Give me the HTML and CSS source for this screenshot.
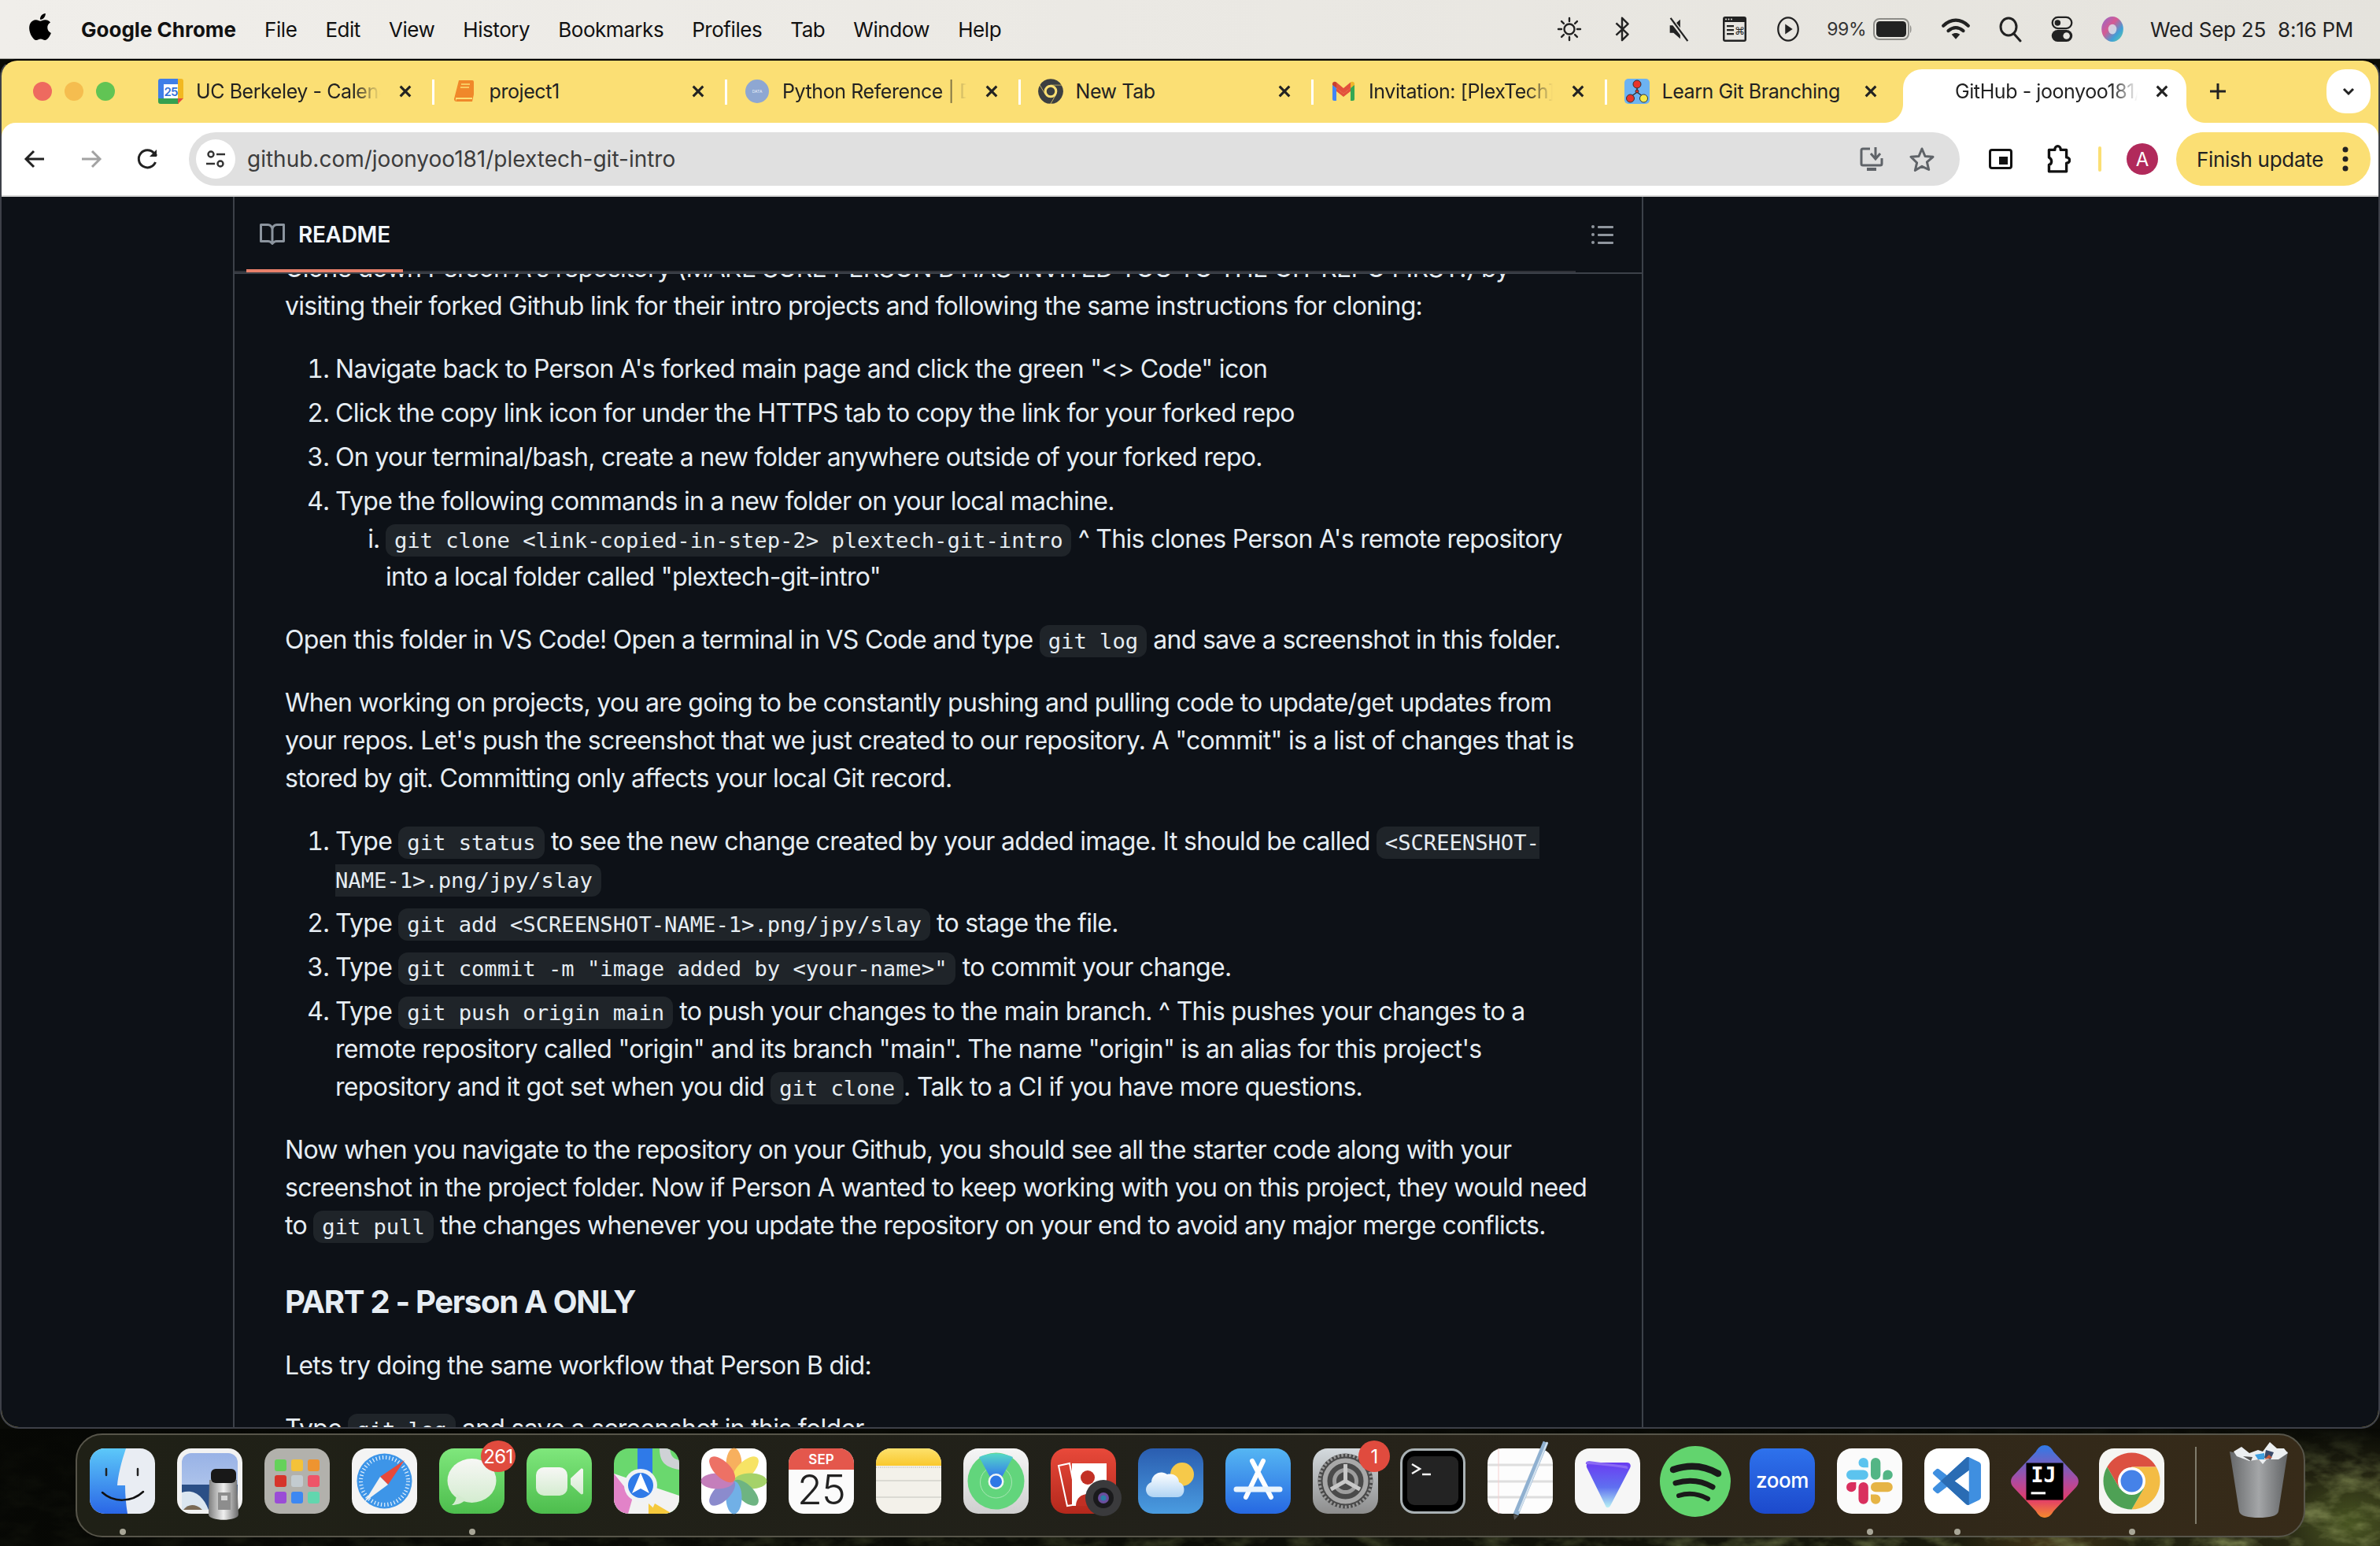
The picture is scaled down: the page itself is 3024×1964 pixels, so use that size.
FILE: index.html
```html
<!DOCTYPE html>
<html lang="en">
<head>
<meta charset="utf-8">
<title>GitHub - joonyoo181/plextech-git-intro</title>
<link rel="stylesheet" href="styles.css">
</head>
<body>
<div class="screen">
  <header class="menubar">
    <svg class="apple" viewBox="0 0 24 24"><path d="M12.152 6.896c-.948 0-2.415-1.078-3.96-1.04-2.04.027-3.91 1.183-4.961 3.014-2.117 3.675-.546 9.103 1.519 12.09 1.013 1.454 2.208 3.09 3.792 3.039 1.52-.065 2.09-.987 3.935-.987 1.831 0 2.35.987 3.96.948 1.637-.026 2.676-1.48 3.676-2.948 1.156-1.688 1.636-3.325 1.662-3.415-.039-.013-3.182-1.221-3.22-4.857-.026-3.04 2.48-4.494 2.597-4.559-1.429-2.09-3.623-2.324-4.39-2.376-2-.156-3.675 1.09-4.61 1.09zM15.53 3.83c.843-1.012 1.4-2.427 1.245-3.83-1.207.052-2.662.805-3.532 1.818-.78.896-1.454 2.338-1.273 3.714 1.338.104 2.715-.688 3.559-1.701"/></svg>
    <nav class="menus">
      <span class="menu-app">Google Chrome</span>
      <span>File</span><span>Edit</span><span>View</span><span>History</span><span>Bookmarks</span><span>Profiles</span><span>Tab</span><span>Window</span><span>Help</span>
    </nav>
    <div class="status">
      <span class="st"><svg viewBox="0 0 32 32" class="st-ic" fill="none" stroke="#222" stroke-width="2.4" stroke-linecap="round"><circle cx="16" cy="16" r="6.5"/><path d="M16 2v4M16 26v4M2 16h4M26 16h4M6.1 6.1l2.8 2.8M23.1 23.1l2.8 2.8M6.1 25.9l2.8-2.8M23.1 8.9l2.8-2.8"/></svg></span>
      <span class="st st-bt"><svg viewBox="0 0 32 36" class="st-ic" fill="none" stroke="#222" stroke-width="2.6" stroke-linejoin="round"><path d="M8 10l16 15-8 8V3l8 8L8 26"/></svg></span>
      <span class="st st-mute"><svg viewBox="0 0 32 36" class="st-ic"><path d="M4 13h5l9-8v26l-9-8H4z" fill="#222"/><path d="M4 3l24 31" stroke="#e8e6e1" stroke-width="6"/><path d="M5 3l23 31" stroke="#222" stroke-width="2.4"/></svg></span>
      <span class="st st-cmdwin"><svg viewBox="0 0 32 34" class="st-ic"><rect x="1" y="1" width="30" height="32" rx="3" fill="#222"/><rect x="3.5" y="8" width="25" height="22.5" fill="#e8e6e1"/><path d="M6 12h9v2.2H6zM6 17h9v2.2H6zM6 22h9v2.2H6z" fill="#222"/><text x="22" y="24" class="st-cmd">⌘</text><circle cx="5" cy="4.5" r="1" fill="#e8e6e1"/><circle cx="8.5" cy="4.5" r="1" fill="#e8e6e1"/><circle cx="12" cy="4.5" r="1" fill="#e8e6e1"/></svg></span>
      <span class="st"><svg viewBox="0 0 32 36" class="st-ic"><ellipse cx="16" cy="18" rx="13.5" ry="15.5" fill="none" stroke="#222" stroke-width="2.4"/><path d="M12 11l10 7-10 7z" fill="#222"/></svg></span>
      <span class="st-batt">99%</span>
      <svg class="battery" viewBox="0 0 50 28"><rect x="1" y="1" width="44" height="26" rx="7" fill="none" stroke="#8d8c88" stroke-width="2"/><rect x="4" y="4" width="38" height="20" rx="4.5" fill="#222"/><path d="M47 9c2 1 2 9 0 10z" fill="#8d8c88"/></svg>
      <span class="st st-wifi"><svg viewBox="0 0 36 30" class="st-wide" fill="none" stroke="#222" stroke-width="4" stroke-linecap="round"><path d="M3 11c9-9 21-9 30 0M9 17c6-5 12-5 18 0"/><path d="M13 21.5L18 27l5-5.5c-3-2.5-7-2.5-10 0z" fill="#222" stroke="none"/></svg></span>
      <span class="st st-search"><svg viewBox="0 0 32 34" class="st-ic" fill="none" stroke="#222" stroke-width="3" stroke-linecap="round"><ellipse cx="13" cy="14" rx="10" ry="11"/><path d="M20 23l8 9"/></svg></span>
      <span class="st st-ctl"><svg viewBox="0 0 32 36" class="st-ic"><rect x="3" y="2" width="26" height="15" rx="7.5" fill="none" stroke="#222" stroke-width="2.4"/><circle cx="10" cy="9.5" r="4" fill="#222"/><rect x="2" y="19" width="28" height="16" rx="8" fill="#222"/><circle cx="22" cy="27" r="4.5" fill="#e8e6e1"/></svg></span>
      <span class="st st-siri"><svg viewBox="0 0 28 32" class="st-ic"><defs><linearGradient id="siri" x1="0" y1="0" x2="1" y2="1"><stop offset="0" stop-color="#8f6ad0"/><stop offset=".4" stop-color="#d65a92"/><stop offset=".7" stop-color="#3fa0d8"/><stop offset="1" stop-color="#5fd0a0"/></linearGradient></defs><ellipse cx="14" cy="16" rx="13" ry="15" fill="url(#siri)"/><ellipse cx="14" cy="16" rx="5" ry="6" fill="#dfe7ee" opacity=".8"/></svg></span>
      <span class="clock">Wed Sep 25 <span class="clock-time">8:16 PM</span></span>
    </div>
  </header>

  <main class="window">
    <div class="tabstrip">
      <div class="lights"><i class="light red"></i><i class="light amber"></i><i class="light green"></i></div>
      <div class="tab">
        <svg class="fav" viewBox="0 0 32 32"><path d="M3 0h23v7H7v18H0V3a3 3 0 0 1 3-3z" fill="#3f7ee8"/><path d="M0 25h26v7H3a3 3 0 0 1-3-3z" fill="#35a04f"/><path d="M25 0h4a3 3 0 0 1 3 3v22h-7z" fill="#f2b820"/><path d="M25 25h7l-7 7z" fill="#e74c3c"/><rect x="7" y="7" width="18" height="18" fill="#fff"/><text x="16" y="22" class="fav-num">25</text></svg>
        <span class="tab-title fade">UC Berkeley - Calendar</span>
        <svg class="close" viewBox="0 0 20 20"><path d="M3 3l14 14M17 3L3 17"/></svg>
      </div>
      <div class="tab">
        <svg class="fav" viewBox="0 0 32 32"><path d="M9 2h17a2 2 0 0 1 2 2v16l-2 9H6a3 3 0 0 1-3-3.500z" fill="#f0882a"/><path d="M5 24h21v2H6l-1 3z" fill="#fbdf74"/><path d="M12 7h11M11 11h11" stroke="#fbdf74" stroke-width="1.500"/></svg>
        <span class="tab-title">project1</span>
        <svg class="close" viewBox="0 0 20 20"><path d="M3 3l14 14M17 3L3 17"/></svg>
      </div>
      <div class="tab">
        <svg class="fav" viewBox="0 0 32 32"><circle cx="16" cy="16" r="15" fill="#8ea7d2"/><text x="16" y="18" class="fav-data">DATA</text></svg>
        <span class="tab-title fade">Python Reference | DataCamp</span>
        <svg class="close" viewBox="0 0 20 20"><path d="M3 3l14 14M17 3L3 17"/></svg>
      </div>
      <div class="tab">
        <svg class="fav" viewBox="5 5 73 73"><g fill="#3c3f41"><path d="M10.300 23.500A36 36 0 0 1 72.700 23.500H41.500L25.900 50.500z"/><path d="M72.700 23.500A36 36 0 0 1 41.500 77.500L57.100 50.500 41.500 23.500z"/><path d="M41.500 77.500A36 36 0 0 1 10.300 23.500L25.900 50.500H57.100z"/></g><circle cx="41.500" cy="41.500" r="19" fill="#fbdf74"/><path d="M41.500 23.500H74M25.900 50.500L9 22M57.100 50.500L41 78" stroke="#fbdf74" stroke-width="1.500"/><circle cx="41.500" cy="41.500" r="12" fill="#3c3f41"/></svg>
        <span class="tab-title">New Tab</span>
        <svg class="close" viewBox="0 0 20 20"><path d="M3 3l14 14M17 3L3 17"/></svg>
      </div>
      <div class="tab">
        <svg class="fav" viewBox="0 0 32 32"><path d="M2 8l14 11L30 8v4L16 23 2 12z" fill="#e2503c"/><path d="M2 6.500C2 4 5 3 7 4.500L7 12 2 8z" fill="#c94030"/><path d="M30 6.500C30 4 27 3 25 4.500L25 12l5-4z" fill="#f0b429"/><path d="M7 4.500L16 12l9-7.500V12l-9 7-9-7z" fill="#e2503c"/><path d="M2 8l5 4v16H4a2 2 0 0 1-2-2z" fill="#4285f4"/><path d="M30 8l-5 4v16h3a2 2 0 0 0 2-2z" fill="#34a853"/></svg>
        <span class="tab-title fade">Invitation: [PlexTech] Git</span>
        <svg class="close" viewBox="0 0 20 20"><path d="M3 3l14 14M17 3L3 17"/></svg>
      </div>
      <div class="tab tab-last">
        <svg class="fav" viewBox="0 0 32 32"><rect width="32" height="32" rx="5" fill="#6db3f2"/><path d="M16 9v8M16 17L8 23M16 17l8 6" stroke="#333" stroke-width="1.500"/><circle cx="16" cy="7" r="5" fill="#e8352b" stroke="#333"/><circle cx="16" cy="16" r="2" fill="#e8352b" stroke="#333"/><circle cx="7.500" cy="25" r="5" fill="#e8352b" stroke="#333"/><circle cx="24.500" cy="25" r="5" fill="#f4e84a" stroke="#333"/></svg>
        <span class="tab-title">Learn Git Branching</span>
        <svg class="close" viewBox="0 0 20 20"><path d="M3 3l14 14M17 3L3 17"/></svg>
      </div>
      <div class="tab-active">
        <span class="tab-title tab-title-active fade">GitHub - joonyoo181/plextech</span>
        <svg class="close" viewBox="0 0 20 20"><path d="M3 3l14 14M17 3L3 17"/></svg>
      </div>
      <svg class="newtab" viewBox="0 0 24 24"><path d="M12 2v20M2 12h20"/></svg>
      <div class="tabsearch"><svg viewBox="0 0 20 20"><path d="M4 7l6 6 6-6"/></svg></div>
    </div>

    <div class="toolbar">
      <span class="tb"><svg viewBox="0 0 28 28" class="tb-ic" fill="none" stroke="#222" stroke-width="3"><path d="M26 14H4M13 4L3 14l10 10"/></svg></span>
      <span class="tb"><svg viewBox="0 0 28 28" class="tb-ic" fill="none" stroke="#a2a2a2" stroke-width="3"><path d="M2 14h22M15 4l10 10-10 10"/></svg></span>
      <span class="tb"><svg viewBox="0 0 28 28" class="tb-ic" fill="none" stroke="#222" stroke-width="3"><path d="M23.500 18A11 11 0 1 1 21.500 6.500L25 10"/><path d="M25 2v9h-9" stroke="none" fill="#222"/></svg></span>
      <div class="omnibox">
        <span class="tune"><svg viewBox="0 0 28 28" fill="none" stroke="#333" stroke-width="2.400"><circle cx="8" cy="8" r="3.500"/><path d="M15 8h11M2 20h11"/><circle cx="20" cy="20" r="3.500"/></svg></span>
        <span class="url">github.com/joonyoo181/plextech-git-intro</span>
        <span class="omni-ic"><svg viewBox="0 0 32 32" class="tb-ic32" fill="none" stroke="#5f6368" stroke-width="3"><path d="M14 3H5a2 2 0 0 0-2 2v17a2 2 0 0 0 2 2h22a2 2 0 0 0 2-2v-7"/><path d="M10 29h12" stroke-width="4"/><path d="M21 1v14M15 9l6 7 6-7"/></svg></span>
        <span class="omni-ic"><svg viewBox="0 0 32 32" class="tb-ic32" fill="none" stroke="#5f6368" stroke-width="3" stroke-linejoin="round"><path d="M16 3l4 9.500 10 .8-7.600 6.500 2.300 9.700L16 25.300l-8.700 5.200 2.300-9.700L2 13.300l10-.8z"/></svg></span>
      </div>
      <span class="tb tb-pip"><svg viewBox="0 0 32 32" class="tb-ic32"><rect x="2.500" y="4.500" width="27" height="23" rx="2.500" fill="none" stroke="#111" stroke-width="3"/><rect x="14" y="13" width="11" height="10" fill="#111"/></svg></span>
      <span class="tb"><svg viewBox="0 0 32 36" class="tb-ext" fill="none" stroke="#111" stroke-width="3.200"><path d="M6 7h7c0-6 7-6 7 0h7v9c5 0 5 7 0 7v10H6v-8c4-1 4-7 0-9z" stroke-linejoin="round"/></svg></span>
      <span class="tb-sep"></span>
      <span class="avatar">A</span>
      <div class="finish">
        <span>Finish update</span>
        <svg class="dots" viewBox="0 0 8 34"><circle cx="4" cy="5" r="3.500"/><circle cx="4" cy="17" r="3.500"/><circle cx="4" cy="29" r="3.500"/></svg>
      </div>
    </div>

    <section class="page">
      <article class="readme">
        <div class="readme-head">
          <svg class="book" viewBox="0 0 16 16"><path d="M0 1.750A.750.750 0 0 1 .750 1h4.253c1.227 0 2.317.590 3 1.501A3.743 3.743 0 0 1 11.006 1h4.245a.750.750 0 0 1 .750.750v10.500a.750.750 0 0 1-.750.750h-4.507a2.250 2.250 0 0 0-1.591.659l-.622.621a.750.750 0 0 1-1.060 0l-.622-.621A2.250 2.250 0 0 0 5.258 13H.750a.750.750 0 0 1-.750-.750Zm7.251 10.324.004-5.073-.002-2.253A2.250 2.250 0 0 0 5.003 2.500H1.500v9h3.757a3.750 3.750 0 0 1 1.994.574ZM8.755 4.750l-.004 7.322a3.752 3.752 0 0 1 1.992-.572H14.500v-9h-3.495a2.250 2.250 0 0 0-2.250 2.250Z"/></svg>
          <span class="readme-label">README</span>
          <svg class="toc" viewBox="0 0 34 24"><circle cx="2" cy="2" r="2"/><circle cx="2" cy="12" r="2"/><circle cx="2" cy="22" r="2"/><rect x="8" y="1" width="20" height="3" rx="1"/><rect x="8" y="11" width="20" height="3" rx="1"/><rect x="8" y="21" width="20" height="3" rx="1"/></svg>
        </div>
        <div class="markdown">
          <p class="clipped-first">Clone down Person A's repository (MAKE SURE PERSON B HAS INVITED YOU TO THE GIT REPO FIRST!) by visiting their forked Github link for their intro projects and following the same instructions for cloning:</p>
          <ol>
            <li>Navigate back to Person A's forked main page and click the green "&lt;&gt; Code" icon</li>
            <li>Click the copy link icon for under the HTTPS tab to copy the link for your forked repo</li>
            <li>On your terminal/bash, create a new folder anywhere outside of your forked repo.</li>
            <li>Type the following commands in a new folder on your local machine.
              <ol class="roman">
                <li><code>git clone &lt;link-copied-in-step-2&gt; plextech-git-intro</code> ^ This clones Person A's remote repository into a local folder called "plextech-git-intro"</li>
              </ol>
            </li>
          </ol>
          <p>Open this folder in VS Code! Open a terminal in VS Code and type <code>git log</code> and save a screenshot in this folder.</p>
          <p>When working on projects, you are going to be constantly pushing and pulling code to update/get updates from your repos. Let's push the screenshot that we just created to our repository. A "commit" is a list of changes that is stored by git. Committing only affects your local Git record.</p>
          <ol>
            <li>Type <code>git status</code> to see the new change created by your added image. It should be called <code>&lt;SCREENSHOT-NAME-1&gt;.png/jpy/slay</code></li>
            <li>Type <code>git add &lt;SCREENSHOT-NAME-1&gt;.png/jpy/slay</code> to stage the file.</li>
            <li>Type <code>git commit -m "image added by &lt;your-name&gt;"</code> to commit your change.</li>
            <li>Type <code>git push origin main</code> to push your changes to the main branch. ^ This pushes your changes to a remote repository called "origin" and its branch "main". The name "origin" is an alias for this project's repository and it got set when you did <code>git clone</code>. Talk to a CI if you have more questions.</li>
          </ol>
          <p>Now when you navigate to the repository on your Github, you should see all the starter code along with your screenshot in the project folder. Now if Person A wanted to keep working with you on this project, they would need to <code>git pull</code> the changes whenever you update the repository on your end to avoid any major merge conflicts.</p>
          <h3>PART 2 - Person A ONLY</h3>
          <p>Lets try doing the same workflow that Person B did:</p>
          <p>Type <code>git log</code> and save a screenshot in this folder.</p>
        </div>
      </article>
    </section>
  </main>

  <footer class="desk">
    <svg class="wallpaper" viewBox="0 0 3024 150" preserveAspectRatio="none"><defs><filter id="moss" x="0" y="0" width="100%" height="100%"><feTurbulence type="fractalNoise" baseFrequency=".025 .05" numOctaves="4" seed="7"/><feColorMatrix values="0 0 0 0 .26  0 0 0 0 .30  0 0 0 0 .10  1.800 0 0 0 -.72"/></filter><linearGradient id="fadeL" x1="0" y1="0" x2="1" y2="0"><stop offset="0" stop-color="#060704" stop-opacity=".94"/><stop offset=".7" stop-color="#060704" stop-opacity=".5"/><stop offset="1" stop-color="#060704" stop-opacity="0"/></linearGradient><linearGradient id="fadeT" x1="0" y1="0" x2="0" y2="1"><stop offset="0" stop-color="#060704" stop-opacity=".95"/><stop offset=".45" stop-color="#060704" stop-opacity=".1"/><stop offset="1" stop-color="#060704" stop-opacity="0"/></linearGradient></defs><rect width="3024" height="150" filter="url(#moss)"/><rect width="3024" height="150" fill="url(#fadeL)"/><rect width="3024" height="150" fill="url(#fadeT)"/></svg>
    <div class="dock">
      <span class="app running"><svg viewBox="0 0 83 83"><defs><linearGradient id="fb" x1="0" y1="0" x2="0" y2="1"><stop offset="0" stop-color="#5cc8f9"/><stop offset="1" stop-color="#2a66e6"/></linearGradient></defs><rect width="83" height="83" rx="19" fill="#e9edf3"/><path d="M19 0h27C40 18 36 34 35 47h10c0 12 1 24 3 36H19A19 19 0 0 1 0 64V19A19 19 0 0 1 19 0z" fill="url(#fb)"/><path d="M21 26v8M61 26v8" stroke="#222" stroke-width="2.500" stroke-linecap="round"/><path d="M16 56c14 13 37 13 52-1" fill="none" stroke="#111" stroke-width="2.500" stroke-linecap="round"/></svg></span>
      <span class="app"><svg viewBox="0 0 83 83"><defs><linearGradient id="ps" x1="0" y1="0" x2="0" y2="1"><stop offset="0" stop-color="#98b2e6"/><stop offset="1" stop-color="#bcd0ee"/></linearGradient><linearGradient id="pg" x1="0" y1="0" x2="1" y2="0"><stop offset="0" stop-color="#7d7d7d"/><stop offset=".5" stop-color="#f0f0f0"/><stop offset="1" stop-color="#6a6a6a"/></linearGradient></defs><rect width="83" height="83" rx="18" fill="#f2f2f2"/><path d="M18 6h47a12 12 0 0 1 12 12v60H6V18A12 12 0 0 1 18 6z" fill="url(#ps)"/><rect x="6" y="46" width="71" height="32" fill="#2b4f86"/><path d="M6 56c14-4 26 2 34 22H6z" fill="#dbe6f0"/><path d="M8 78c6-8 16-8 24 0z" fill="#7a6a55"/><path d="M41 40h35l2 44c0 9-38 9-38 0z" fill="url(#pg)"/><rect x="43" y="26" width="32" height="18" rx="6" fill="#181818"/><rect x="52" y="56" width="16" height="22" fill="#8d8d8d"/><path d="M56 60h8v6h-8z" fill="#d8d8d8"/></svg></span>
      <span class="app"><svg viewBox="0 0 83 83"><rect width="83" height="83" rx="19" fill="#b2b1ac"/><g><rect x="13" y="14" width="15" height="15" rx="3" fill="#65d25a"/><rect x="34" y="14" width="15" height="15" rx="3" fill="#f4c238"/><rect x="55" y="14" width="15" height="15" rx="3" fill="#ee9430"/><rect x="13" y="34" width="15" height="15" rx="3" fill="#d6342b"/><rect x="34" y="34" width="15" height="15" rx="3" fill="#c3cbd0"/><rect x="55" y="34" width="15" height="15" rx="3" fill="#ee5468"/><rect x="13" y="55" width="15" height="15" rx="3" fill="#9a4cd6"/><rect x="34" y="55" width="15" height="15" rx="3" fill="#3d88f2"/><rect x="55" y="55" width="15" height="15" rx="3" fill="#62d6ae"/></g></svg></span>
      <span class="app"><svg viewBox="0 0 83 83"><rect width="83" height="83" rx="19" fill="#f4f4f4"/><circle cx="41.500" cy="41.500" r="35" fill="#3d95e8"/><circle cx="41.500" cy="41.500" r="30" fill="none" stroke="#e6f2fc" stroke-width="5" stroke-dasharray="1.200 3"/><path d="M67 15L36 36l10 10z" fill="#e8493a"/><path d="M16 68l20-32 10 10z" fill="#f2f2f2"/></svg></span>
      <span class="app running"><svg viewBox="0 0 83 83"><defs><linearGradient id="mg" x1="0" y1="0" x2="0" y2="1"><stop offset="0" stop-color="#7fe77c"/><stop offset="1" stop-color="#4dbd4d"/></linearGradient><linearGradient id="mw" x1="0" y1="0" x2="0" y2="1"><stop offset="0" stop-color="#f7f7f5"/><stop offset="1" stop-color="#d4ecd0"/></linearGradient></defs><rect width="83" height="83" rx="19" fill="url(#mg)"/><ellipse cx="41.500" cy="41" rx="31" ry="28" fill="url(#mw)"/><path d="M22 58c0 6-2 11-6 14 6 0 13-2 18-7z" fill="#d4ecd0"/></svg><b class="badge">261</b></span>
      <span class="app"><svg viewBox="0 0 83 83"><rect width="83" height="83" rx="19" fill="url(#mg)"/><rect x="12" y="24" width="40" height="36" rx="10" fill="url(#mw)"/><path d="M56 38l13-12c1-1 3 0 3 1v30c0 1-2 2-3 1L56 46z" fill="url(#mw)"/></svg></span>
      <span class="app"><svg viewBox="0 0 83 83"><defs><clipPath id="sq"><rect width="83" height="83" rx="19"/></clipPath></defs><g clip-path="url(#sq)"><rect width="83" height="83" fill="#6ad86e"/><path d="M0 32L83 60v23H0z" fill="#f2f2f2"/><path d="M0 32l24 30-6 21H0z" fill="#e283c8"/><path d="M44 70l14 13H44z" fill="#f5c93c"/><path d="M46 83l6-13 22 13z" fill="#f5c93c"/><rect x="30" y="0" width="19" height="40" fill="#2f7ae8"/><path d="M58 0c0 18 8 24 25 27V15C74 13 72 8 71 0z" fill="#cfd2d6"/><circle cx="34" cy="47" r="21" fill="#f0f2f5"/><circle cx="34" cy="47" r="16" fill="#2f7ae8"/><path d="M34 31l11 26-11-6-11 6z" fill="#fff"/></g></svg></span>
      <span class="app"><svg viewBox="0 0 83 83"><rect width="83" height="83" rx="19" fill="#fff"/><g transform="translate(41.500 41.500)" opacity=".78"><ellipse cy="-21" rx="10" ry="21" fill="#f59a32"/><ellipse cy="-21" rx="10" ry="21" fill="#f5dc3a" transform="rotate(45)"/><ellipse cy="-21" rx="10" ry="21" fill="#8cc63f" transform="rotate(90)"/><ellipse cy="-21" rx="10" ry="21" fill="#46a060" transform="rotate(135)"/><ellipse cy="-21" rx="10" ry="21" fill="#4a9ae0" transform="rotate(180)"/><ellipse cy="-21" rx="10" ry="21" fill="#6b6bc0" transform="rotate(225)"/><ellipse cy="-21" rx="10" ry="21" fill="#b45aa8" transform="rotate(270)"/><ellipse cy="-21" rx="10" ry="21" fill="#e84a3a" transform="rotate(315)"/></g></svg></span>
      <span class="app"><svg viewBox="0 0 83 83"><rect width="83" height="83" rx="19" fill="#fbfbfb"/><path d="M19 0h45a19 19 0 0 1 19 19v8H0v-8A19 19 0 0 1 19 0z" fill="#e4574c"/><text x="41.500" y="20" class="cal-mon">SEP</text><text x="41.500" y="71" class="cal-day">25</text></svg></span>
      <span class="app"><svg viewBox="0 0 83 83"><defs><linearGradient id="ny" x1="0" y1="0" x2="0" y2="1"><stop offset="0" stop-color="#fde16c"/><stop offset="1" stop-color="#f9c82d"/></linearGradient></defs><rect width="83" height="83" rx="19" fill="#f3f1ea"/><path d="M19 0h45a19 19 0 0 1 19 19v3H0v-3A19 19 0 0 1 19 0z" fill="url(#ny)"/><path d="M0 41h83M0 62h83" stroke="#d4d2cb" stroke-width="1.500"/><path d="M0 24h83" stroke="#bdbbb4" stroke-width="1.500" stroke-dasharray="1 1.500"/></svg></span>
      <span class="app"><svg viewBox="0 0 83 83"><defs><linearGradient id="fm" x1="0" y1="0" x2="0" y2="1"><stop offset="0" stop-color="#f6f6f6"/><stop offset="1" stop-color="#cfcfcf"/></linearGradient><linearGradient id="fc" x1="0" y1="0" x2="0" y2="1"><stop offset="0" stop-color="#55d8c8"/><stop offset="1" stop-color="#2f6ef0"/></linearGradient></defs><rect width="83" height="83" rx="19" fill="url(#fm)"/><circle cx="41.500" cy="41.500" r="36" fill="#62d57c"/><circle cx="41.500" cy="43" r="20" fill="none" stroke="#a9e6b4" stroke-width="1"/><path d="M20 11c12-6 31-6 43 0L47 40H36z" fill="url(#fc)"/><circle cx="41.500" cy="42" r="10" fill="#f2f6f8"/><circle cx="41.500" cy="42" r="7.500" fill="#2e78e6"/></svg></span>
      <span class="app"><svg viewBox="0 0 83 83"><defs><linearGradient id="pb" x1="0" y1="0" x2="0" y2="1"><stop offset="0" stop-color="#e8493a"/><stop offset="1" stop-color="#b4281c"/></linearGradient></defs><rect width="83" height="83" rx="19" fill="url(#pb)"/><path d="M10 22l14-3 10 52-13 2z" fill="none" stroke="#fff" stroke-width="2"/><path d="M26 18l27-4-20 3zM27 19h44v54H27z" fill="#fff"/><circle cx="47" cy="37" r="9" fill="#c23024"/><path d="M32 73c0-20 30-20 30 0z" fill="#c23024"/><circle cx="67" cy="63" r="23" fill="#3a3a3c"/><circle cx="67" cy="63" r="13" fill="#1a1a1c"/><circle cx="67" cy="63" r="7" fill="#6a4e9e"/><circle cx="67" cy="63" r="3.500" fill="#2b7fa8"/></svg></span>
      <span class="app"><svg viewBox="0 0 83 83"><defs><linearGradient id="wb" x1="0" y1="0" x2="0" y2="1"><stop offset="0" stop-color="#2a5db0"/><stop offset="1" stop-color="#4a9ce0"/></linearGradient><linearGradient id="wc" x1="0" y1="0" x2="0" y2="1"><stop offset="0" stop-color="#fff"/><stop offset="1" stop-color="#b0d4f4"/></linearGradient></defs><rect width="83" height="83" rx="19" fill="url(#wb)"/><circle cx="56" cy="33" r="15" fill="#f6c94a"/><path d="M20 62c-11 0-14-15-3-19 0-11 13-16 20-10 8-2 15 3 15 10 9 2 9 19-2 19z" fill="url(#wc)"/></svg></span>
      <span class="app"><svg viewBox="0 0 83 83"><defs><linearGradient id="as" x1="0" y1="0" x2="0" y2="1"><stop offset="0" stop-color="#55b6f3"/><stop offset="1" stop-color="#2668e2"/></linearGradient></defs><rect width="83" height="83" rx="19" fill="url(#as)"/><path d="M34 16l24 46M48 16L26 62" stroke="#fff" stroke-width="6" stroke-linecap="round"/><path d="M14 52h55" stroke="#eaf4fd" stroke-width="7" stroke-linecap="round"/></svg></span>
      <span class="app"><svg viewBox="0 0 83 83"><defs><linearGradient id="ss" x1="0" y1="0" x2="0" y2="1"><stop offset="0" stop-color="#d4dade"/><stop offset="1" stop-color="#8d8d8d"/></linearGradient></defs><rect width="83" height="83" rx="19" fill="url(#ss)"/><circle cx="41.500" cy="41.500" r="35" fill="#4a4a4a"/><circle cx="41.500" cy="41.500" r="33" fill="none" stroke="#9a9a9a" stroke-width="4" stroke-dasharray="2.500 2.500"/><circle cx="41.500" cy="41.500" r="26" fill="none" stroke="#a8a8a8" stroke-width="6"/><circle cx="41.500" cy="41.500" r="14" fill="none" stroke="#9e9e9e" stroke-width="5"/><path d="M41.500 41.500V20M41.500 41.500L23 52M41.500 41.500L60 52" stroke="#c8c8c8" stroke-width="5"/></svg><b class="badge badge-one">1</b></span>
      <span class="app"><svg viewBox="0 0 83 83"><rect width="83" height="83" rx="18" fill="#a9b1b4"/><rect x="3" y="3" width="77" height="77" rx="15" fill="#000"/><rect x="9" y="10" width="65" height="62" rx="9" fill="#232323"/><path d="M15 20l10 6-10 6" fill="none" stroke="#f4f4f4" stroke-width="2.500"/><path d="M28 33h11" stroke="#f4f4f4" stroke-width="2.500"/></svg></span>
      <span class="app"><svg viewBox="0 0 83 83"><rect width="83" height="83" rx="19" fill="#fdfdfd"/><path d="M0 21h83M0 42h83M0 62h83" stroke="#dedede" stroke-width="3"/><path d="M14 0v83" stroke="#f6cfd0" stroke-width="1"/><path d="M74 -8L36 84" stroke="#8fb0d0" stroke-width="7"/><path d="M76 -8L40 80" stroke="#d4e2ee" stroke-width="2"/><path d="M33 84l1 7 5-5z" fill="#555"/></svg></span>
      <span class="app"><svg viewBox="0 0 83 83"><defs><linearGradient id="pv" x1="0" y1="0" x2="0" y2="1"><stop offset="0" stop-color="#6a3cf2"/><stop offset=".55" stop-color="#5f70f0"/><stop offset="1" stop-color="#b8f2f4"/></linearGradient></defs><rect width="83" height="83" rx="19" fill="#f6f6f6"/><path d="M15 24c-1-4 1-6 5-6h46c4 0 6 3 4 7L45 73c-2 3-5 3-6 0z" fill="url(#pv)"/><path d="M14 20c-1-3 2-4 4-4l46 6c3 0 4 2 3 4-15-3-35-5-53-6z" fill="#8a6af4"/></svg></span>
      <span class="app app-big"><svg viewBox="0 0 90 90"><circle cx="45" cy="45" r="45" fill="#62d46e"/><g fill="none" stroke="#1a1a1a" stroke-linecap="round"><path d="M17 30c20-7 40-5 57 5" stroke-width="8.500"/><path d="M20 47c17-5 33-3 47 5" stroke-width="7"/><path d="M24 63c13-4 26-2 37 4" stroke-width="6"/></g></svg></span>
      <span class="app"><svg viewBox="0 0 83 83"><defs><linearGradient id="zm" x1="0" y1="0" x2="0" y2="1"><stop offset="0" stop-color="#2e72ec"/><stop offset="1" stop-color="#1c49cc"/></linearGradient></defs><rect width="83" height="83" rx="19" fill="url(#zm)"/><text x="41.500" y="50" class="zoom-text">zoom</text></svg></span>
      <span class="app running"><svg viewBox="0 0 83 83"><rect width="83" height="83" rx="19" fill="#fbfbfb"/><g transform="translate(12 12) scale(2.450)"><path fill="#d92f5e" d="M5.042 15.165a2.528 2.528 0 0 1-2.520 2.523A2.528 2.528 0 0 1 0 15.165a2.527 2.527 0 0 1 2.522-2.520h2.520v2.520zM6.313 15.165a2.527 2.527 0 0 1 2.521-2.520 2.527 2.527 0 0 1 2.521 2.520v6.313A2.528 2.528 0 0 1 8.834 24a2.528 2.528 0 0 1-2.521-2.522v-6.313z"/><path fill="#5cc3ee" d="M8.834 5.042a2.528 2.528 0 0 1-2.521-2.520A2.528 2.528 0 0 1 8.834 0a2.528 2.528 0 0 1 2.521 2.522v2.520H8.834zM8.834 6.313a2.528 2.528 0 0 1 2.521 2.521 2.528 2.528 0 0 1-2.521 2.521H2.522A2.528 2.528 0 0 1 0 8.834a2.528 2.528 0 0 1 2.522-2.521h6.312z"/><path fill="#53b585" d="M18.956 8.834a2.528 2.528 0 0 1 2.522-2.521A2.528 2.528 0 0 1 24 8.834a2.528 2.528 0 0 1-2.522 2.521h-2.522V8.834zM17.688 8.834a2.528 2.528 0 0 1-2.523 2.521 2.527 2.527 0 0 1-2.520-2.521V2.522A2.527 2.527 0 0 1 15.165 0a2.528 2.528 0 0 1 2.523 2.522v6.312z"/><path fill="#e6b445" d="M15.165 18.956a2.528 2.528 0 0 1 2.523 2.522A2.528 2.528 0 0 1 15.165 24a2.527 2.527 0 0 1-2.520-2.522v-2.522h2.520zM15.165 17.688a2.527 2.527 0 0 1-2.520-2.523 2.526 2.526 0 0 1 2.520-2.520h6.313A2.527 2.527 0 0 1 24 15.165a2.528 2.528 0 0 1-2.522 2.523h-6.313z"/></g></svg></span>
      <span class="app running"><svg viewBox="0 0 83 83"><rect width="83" height="83" rx="19" fill="#fff"/><g transform="translate(11 11) scale(2.540)"><path fill="#3f8fe0" d="M23.150 2.587L18.210.210a1.494 1.494 0 0 0-1.705.290l-9.460 8.630-4.120-3.128a.999.999 0 0 0-1.276.057L.327 7.261A1 1 0 0 0 .326 8.740L3.899 12 .326 15.260a1 1 0 0 0 .001 1.479L1.650 17.940a.999.999 0 0 0 1.276.057l4.120-3.128 9.460 8.630a1.492 1.492 0 0 0 1.704.290l4.942-2.377A1.500 1.500 0 0 0 24 20.060V3.939a1.500 1.500 0 0 0-.850-1.352zm-5.146 14.861L10.826 12l7.178-5.448v10.896z"/><path fill="#2a6cb4" d="M16.500.500L7.045 9.130 3.899 12l3.146 2.870 9.460 8.630c.5.470 1.500.500 1.500.500V17.448L10.826 12l7.178-5.448V0s-1-.100-1.504.500z"/></g></svg></span>
      <span class="app app-ij"><svg viewBox="0 0 90 90"><defs><linearGradient id="ijg" x1="0" y1="0" x2="0" y2="1"><stop offset="0" stop-color="#2f7ae8"/><stop offset=".5" stop-color="#b04a9e"/><stop offset=".75" stop-color="#e23c6a"/><stop offset="1" stop-color="#f58a2c"/></linearGradient></defs><path d="M45 0c5 0 8 3 11 8l28 30c4 4 4 10 0 14L56 82c-3 5-6 8-11 8s-8-3-11-8L6 52c-4-4-4-10 0-14L34 8c3-5 6-8 11-8z" fill="url(#ijg)"/><rect x="22" y="22" width="46" height="46" fill="#000"/><text x="28" y="46" class="ij-text">IJ</text><rect x="28" y="58" width="18" height="3" fill="#fff"/></svg></span>
      <span class="app running"><svg viewBox="0 0 83 83"><rect width="83" height="83" rx="19" fill="#f5f5f2"/><path d="M10.300 23.500A36 36 0 0 1 72.700 23.500H41.500L25.900 50.500z" fill="#dc5041"/><path d="M72.700 23.500A36 36 0 0 1 41.500 77.500L57.100 50.500 41.500 23.500z" fill="#f3bc44"/><path d="M41.500 77.500A36 36 0 0 1 10.300 23.500L25.900 50.500H57.100z" fill="#4ea155"/><circle cx="41.500" cy="41.500" r="17.500" fill="#fff"/><circle cx="41.500" cy="41.500" r="14" fill="#4582e8"/></svg></span>
      <i class="dock-sep"></i>
      <span class="trash"><svg viewBox="0 0 74 96"><defs><linearGradient id="tr" x1="0" y1="0" x2="1" y2="0"><stop offset="0" stop-color="#66686a"/><stop offset=".5" stop-color="#a4a6a8"/><stop offset="1" stop-color="#606264"/></linearGradient></defs><path d="M0 12L37 20 74 12 72 24 62 88c-1 6-12 8-25 8s-24-2-25-8L2 24z" fill="url(#tr)"/><path d="M5 12L15 6l10 8 11-4 6 2 9-12 9 8 9 0 5 6-12 8-15 0-5 6-5-6-12 2-16-6z" fill="#eceff1"/><path d="M32 16l12-2 0 8-8 0z" fill="#3fa0e0"/><path d="M46 10l10 3-4 9-8-2z" fill="#3a4a6a"/><path d="M17 18l12 1-2 5z" fill="#555"/><path d="M44 22l6-6 4 4z" fill="#c85a3a"/></svg></span>
    </div>
  </footer>
</div>
</body>
</html>
```

FILE: styles.css
```css
* { box-sizing: border-box; }
html, body { margin: 0; padding: 0; width: 3024px; height: 1964px; overflow: hidden; }
body { background: #0a0b07; font-family: "Inter", "Liberation Sans", sans-serif; }
.screen { width: 3024px; height: 1964px; display: flex; flex-direction: column; }

/* menu bar */
.menubar { height: 75px; flex: none; display: flex; align-items: center; padding-left: 34px; font-size: 26px; letter-spacing: -.45px; color: #111;
  background: linear-gradient(90deg, #f0eeea, #e5e3dd); border-bottom: 1px solid #a8a7a2; }
.apple { width: 34px; height: 36px; fill: #000; margin-top: -6px; }
.menus { display: flex; gap: 36px; margin-left: 35px; font-weight: 400; }
.menu-app { font-weight: 700; letter-spacing: 0; }
.status { margin-left: auto; display: flex; align-items: center; }
.st { width: 68px; flex: none; display: flex; justify-content: center; align-items: center; }
.st-bt { margin-left: -1px; }
.st-mute { margin-left: 4px; }
.st-cmdwin { margin-left: 3px; }
.st-ic { width: 32px; height: 34px; }
.st-wide { width: 38px; height: 32px; }
.st-cmd { font-size: 13px; text-anchor: middle; fill: #222; font-family: "DejaVu Sans", sans-serif; }
.st-batt { font-size: 23px; margin-left: 15px; color: #333; }
.battery { width: 50px; height: 28px; margin-left: 9px; }
.st-wifi { margin-left: 21px; }
.st-search { margin-left: 2px; }
.st-ctl { margin-left: -3px; }
.st-siri { margin-left: -4px; }
.clock { margin-left: 14px; margin-right: 34px; color: #222; white-space: nowrap; letter-spacing: -.25px; }
.clock-time { margin-left: 8px; }

/* browser window */
.window { height: 1740px; flex: none; display: flex; flex-direction: column; border: 2px solid #3d4048; border-top-color: #000; border-radius: 22px 22px 24px 24px; overflow: hidden; background: #fbdf74; }
.tabstrip { height: 79px; flex: none; display: flex; align-items: flex-start; padding-top: 11px; }
.lights { width: 177px; flex: none; height: 56px; display: flex; align-items: center; gap: 16px; padding-left: 40px; }
.light { width: 24px; height: 24px; border-radius: 50%; }
.red { background: #ee6a5f; }
.amber { background: #f5bd4f; }
.green { background: #61c454; }
.tab { position: relative; width: 372.5px; height: 56px; flex: none; display: flex; align-items: center; padding: 0 28px 0 22px; }
.tab::after { content: ""; position: absolute; right: 0; top: 13px; width: 3px; height: 32px; background: #fff; }
.tab-last::after { display: none; }
.fav { width: 32px; height: 32px; flex: none; }
.fav-num { font-size: 15px; font-weight: 600; fill: #2f6fd8; text-anchor: middle; letter-spacing: -1px; }
.fav-data { font-size: 5px; fill: #e8eef8; text-anchor: middle; }
.tab-title { margin-left: 16px; width: 234px; flex: none; overflow: hidden; white-space: nowrap; font-size: 25px; letter-spacing: -.42px; color: #222; }
.fade { mask-image: linear-gradient(90deg, #000 calc(100% - 34px), transparent); -webkit-mask-image: linear-gradient(90deg, #000 calc(100% - 34px), transparent); }
.close { width: 18px; height: 18px; margin-left: auto; fill: none; stroke: #222; stroke-width: 3.4; flex: none; }
.tab-active { position: relative; flex: none; width: 360px; height: 68px; margin-left: 4px; background: #fff; border-radius: 24px 24px 0 0; display: flex; align-items: flex-start; padding: 0 22px 0 66px; }
.tab-active::before, .tab-active::after { content: ""; position: absolute; bottom: 0; width: 24px; height: 24px; }
.tab-active::before { left: -24px; background: radial-gradient(circle at 0 0, #fbdf74 23.5px, #fff 24.500px); }
.tab-active::after { right: -24px; background: radial-gradient(circle at 100% 0, #fbdf74 23.5px, #fff 24.500px); }
.tab-title-active { margin-left: 0; width: 232px; line-height: 56px; }
.tab-active .close { margin-top: 19px; }
.newtab { width: 24px; height: 24px; margin: 16px 0 0 28px; fill: none; stroke: #222; stroke-width: 3; flex: none; }
.tabsearch { margin-left: auto; margin-right: 10px; width: 56px; height: 56px; background: #fff; border-radius: 24px; display: flex; align-items: center; justify-content: center; }
.tabsearch svg { width: 20px; height: 20px; fill: none; stroke: #222; stroke-width: 3; }

/* toolbar */
.toolbar { height: 94px; flex: none; display: flex; align-items: center; padding: 0 10px 0 6px; background: #fff; border-bottom: 2px solid #d6d6d6; border-radius: 18px 18px 0 0; }
.tb { width: 72px; flex: none; display: flex; justify-content: center; align-items: center; }
.tb-ic { width: 28px; height: 28px; }
.tb-ic32 { width: 32px; height: 32px; }
.tb-ext { width: 34px; height: 38px; }
.omnibox { flex: 1; height: 68px; margin-left: 16px; border-radius: 34px; background: #e0e0e0; display: flex; align-items: center; padding: 0 16px 0 9px; }
.tune { width: 50px; height: 50px; flex: none; border-radius: 50%; background: #fff; display: flex; align-items: center; justify-content: center; }
.tune svg { width: 28px; height: 28px; }
.url { margin-left: 15px; margin-right: auto; font-size: 28px; letter-spacing: 0; color: #3c3c3c; }
.omni-ic { width: 64px; flex: none; display: flex; justify-content: center; }
.tb-pip { margin-left: 16px; }
.tb-sep { width: 4px; height: 32px; margin-left: 16px; border-radius: 2px; background: #fbdf74; flex: none; }
.avatar { width: 40px; height: 40px; margin-left: 32px; flex: none; border-radius: 50%; background: #b12a5b; color: #fff; display: flex; align-items: center; justify-content: center; font-size: 24px; }
.finish { width: 247px; height: 68px; margin-left: 23px; flex: none; border-radius: 34px; background: #fbdf74; display: flex; align-items: center; padding-left: 26px; font-size: 26px; letter-spacing: -.3px; color: #222; }
.dots { width: 8px; height: 34px; margin-left: auto; margin-right: 28px; fill: #222; }

/* page */
.page { flex: 1; min-height: 0; background: #0d1117; padding-left: 294px; overflow: hidden; }
.readme { width: 1792px; height: 100%; border: solid #3c4149; border-width: 0 2px; display: flex; flex-direction: column; overflow: hidden; }
.readme-head { position: relative; height: 98px; flex: none; display: flex; align-items: center; padding: 0 32px; border-bottom: 2px solid #3c4149; background: #0d1117; }
.readme-head::before { content: ""; position: absolute; left: 0; width: 1704px; bottom: 0; height: 2px; background: #2f3238; }
.readme-head::after { content: ""; position: absolute; left: 15px; width: 199px; bottom: 0; height: 4px; background: #e8806a; }
.book { width: 32px; height: 32px; fill: #8b949e; flex: none; }
.readme-label { margin-left: 17px; font-size: 28px; font-weight: 600; letter-spacing: -.3px; color: #f0f6fc; }
.toc { width: 34px; height: 24px; margin-left: auto; margin-right: -2px; fill: #8f969e; }

.markdown { flex: 1; min-height: 0; overflow: hidden; padding: 0 64px; font-size: 32px; line-height: 48px; letter-spacing: -.7px; color: #e6edf3; }
.markdown p { margin: 0 0 32px; }
.markdown .clipped-first { margin-top: -31px; }
.markdown ol { margin: 0 0 32px; padding-left: 64px; }
.markdown ol ol { margin: 0; list-style-type: lower-roman; }
.markdown li + li { margin-top: 8px; }
.markdown h3 { margin: 48px 0 32px; font-size: 40px; line-height: 50px; font-weight: 700; letter-spacing: -1.3px; color: #e6edf3; }
.markdown code { font-family: "DejaVu Sans Mono", "Liberation Mono", monospace; font-size: 27.2px; line-height: 1; letter-spacing: -.03px; padding: 5.4px 10.9px; border-radius: 12px; background: #1f2429; color: #e6edf3; }

/* desktop + dock */
.desk { position: relative; flex: 1; min-height: 0; padding: 6px 95px 0 96px;
  background:
    radial-gradient(90px 70px at 2985px 120px, #4d5a24, transparent),
    radial-gradient(120px 30px at 2600px 145px, #55431f, transparent),
    linear-gradient(90deg, #0d0f08 0, #16180c 50%, #2a2a14 100%); }
.wallpaper { position: absolute; left: 0; top: 0; width: 100%; height: 100%; }
.dock { position: relative; height: 132px; display: flex; align-items: flex-start; padding: 17px 0 0 16px; border: 2px solid #57554a; border-radius: 34px; background: linear-gradient(90deg, #1f2016, #22211a 50%, #372b19); }
.app { position: relative; width: 83px; height: 83px; margin-right: 28px; flex: none; display: block; }
.app svg { display: block; width: 83px; height: 83px; overflow: visible; }
.app.running::after { content: ""; position: absolute; left: 37.5px; top: 102px; width: 8px; height: 8px; border-radius: 50%; background: #a8a697; }
.app-big svg { width: 90px; height: 90px; margin: -3px 0 0 -3px; }
.app-ij svg { width: 92px; height: 92px; margin: -4px 0 0 -4px; }
.badge { position: absolute; left: 53px; top: -10px; width: 44px; height: 40px; border-radius: 50%; background: #e04b3e; color: #fff; font-size: 24px; font-weight: 400; letter-spacing: -.6px; display: flex; align-items: center; justify-content: center; }
.badge-one { left: 58px; width: 40px; }
.cal-mon { font-size: 17px; font-weight: 600; fill: #fff; text-anchor: middle; }
.cal-day { font-size: 52px; font-weight: 300; fill: #222; text-anchor: middle; letter-spacing: -1px; }
.zoom-text { font-size: 26px; font-weight: 500; fill: #fff; text-anchor: middle; letter-spacing: -.4px; }
.ij-text { font-size: 26px; font-family: "DejaVu Sans Mono", monospace; font-weight: 700; fill: #fff; }
.dock-sep { width: 2px; height: 98px; margin: -2px 0 0 11px; background: #807c6c; flex: none; }
.trash { width: 74px; height: 96px; margin: -8px 0 0 42px; flex: none; display: block; }
.trash svg { width: 74px; height: 96px; display: block; }
```
